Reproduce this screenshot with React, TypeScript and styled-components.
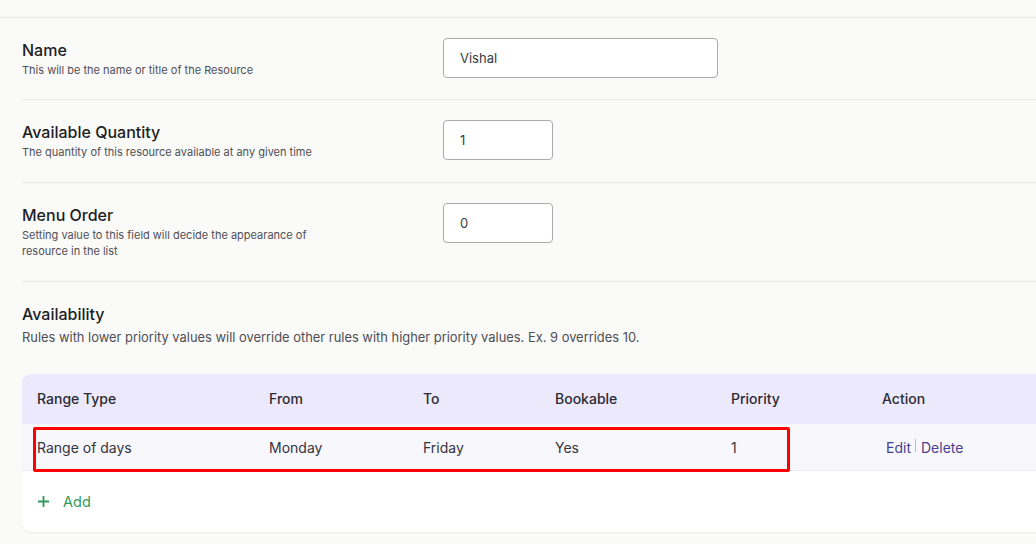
import React from "react";
import styled, { createGlobalStyle } from "styled-components";

const Global = createGlobalStyle`
  html, body { margin: 0; padding: 0; background: #fafaf9; overflow: hidden; }
  body { font-family: Inter, "Noto Sans", Arial, sans-serif; color: #222; -webkit-font-smoothing: antialiased; }
  * { box-sizing: border-box; }
`;

const Page = styled.div`
  width: 1036px;
  height: 544px;
  overflow: hidden;
  background: #fafaf9;
`;

const TopStrip = styled.div`
  height: 18px;
  border-bottom: 1px solid #e6e6e4;
`;

const Body = styled.div`
  padding-left: 22px;
`;

const FieldRow = styled.div<{ $pb: number }>`
  display: flex;
  align-items: flex-start;
  padding: 20px 0 ${(p) => p.$pb}px;
  border-bottom: 1px solid #e6e6e4;
`;

const Label = styled.div`
  width: 421px;
  flex: none;
`;

const Title = styled.div`
  font-size: 16px;
  line-height: 24px;
  font-weight: 500;
  color: #1e1e1e;
`;

const Desc = styled.div`
  font-size: 11px;
  line-height: 16px;
  color: #4f4f55;
  max-width: 300px;
`;

const Input = styled.div<{ $w: number }>`
  width: ${(p) => p.$w}px;
  height: 40px;
  border: 1px solid #a9abae;
  border-radius: 4px;
  background: #fff;
  display: flex;
  align-items: center;
  padding-left: 16px;
  font-size: 13px;
  color: #3a3a44;
`;

const Availability = styled.div`
  padding-top: 20px;
`;

const AvailDesc = styled.div`
  margin-top: 3px;
  font-size: 12.9px;
  line-height: 18px;
  color: #4f4f55;
`;

const Card = styled.div`
  position: relative;
  margin-top: 27px;
  margin-right: -24px;
  background: #fff;
  border-radius: 9px;
  overflow: hidden;
  box-shadow: 0 1px 2px rgba(0, 0, 0, 0.06);
`;

const Grid = styled.div<{ $head?: boolean }>`
  display: grid;
  grid-template-columns: 232px 154px 132px 176px 151px 1fr;
  align-items: center;
  height: ${(p) => (p.$head ? 50 : 47)}px;
  padding-left: 15px;
  background: ${(p) => (p.$head ? "#ede9fd" : "#f8f7fc")};
  border-bottom: 1px solid ${(p) => (p.$head ? "transparent" : "#ececf0")};
  font-size: 14px;
  font-weight: ${(p) => (p.$head ? 500 : 400)};
  color: ${(p) => (p.$head ? "#2b2b33" : "#34343c")};
`;

const Actions = styled.div`
  display: flex;
  align-items: center;
  padding-left: 4px;
  color: #4a3f8e;
`;

const Sep = styled.span`
  display: inline-block;
  width: 1px;
  height: 13px;
  margin: -4px 5px 0 4px;
  background: #b9b9c0;
`;

const AddRow = styled.div`
  display: flex;
  align-items: center;
  gap: 13px;
  height: 61px;
  padding-left: 15px;
  color: #2f9a5a;
  font-size: 14.5px;
`;

const Highlight = styled.div`
  position: absolute;
  left: 11px;
  top: 53px;
  width: 757px;
  height: 45px;
  border: 3px solid #ff0000;
  border-radius: 2px;
  pointer-events: none;
`;

export default function App() {
  return (
    <Page>
      <Global />
      <TopStrip />
      <Body>
        <FieldRow $pb={21}>
          <Label>
            <Title>Name</Title>
            <Desc>This will be the name or title of the Resource</Desc>
          </Label>
          <Input $w={275}>Vishal</Input>
        </FieldRow>
        <FieldRow $pb={22}>
          <Label>
            <Title>Available Quantity</Title>
            <Desc>The quantity of this resource available at any given time</Desc>
          </Label>
          <Input $w={110}>1</Input>
        </FieldRow>
        <FieldRow $pb={22}>
          <Label>
            <Title>Menu Order</Title>
            <Desc>Setting value to this field will decide the appearance of resource in the list</Desc>
          </Label>
          <Input $w={110}>0</Input>
        </FieldRow>
        <Availability>
          <Title>Availability</Title>
          <AvailDesc>
            Rules with lower priority values will override other rules with higher priority values. Ex. 9 overrides 10.
          </AvailDesc>
          <Card>
            <Grid $head>
              <div>Range Type</div>
              <div>From</div>
              <div>To</div>
              <div>Bookable</div>
              <div>Priority</div>
              <div>Action</div>
            </Grid>
            <Grid>
              <div>Range of days</div>
              <div>Monday</div>
              <div>Friday</div>
              <div>Yes</div>
              <div>1</div>
              <Actions>
                <span>Edit</span>
                <Sep />
                <span>Delete</span>
              </Actions>
            </Grid>
            <AddRow>
              <svg width="13" height="13" viewBox="0 0 13 13">
                <path d="M6.5 1v11M1 6.5h11" stroke="#2f9a5a" strokeWidth="1.8" />
              </svg>
              <span>Add</span>
            </AddRow>
            <Highlight />
          </Card>
        </Availability>
      </Body>
    </Page>
  );
}
